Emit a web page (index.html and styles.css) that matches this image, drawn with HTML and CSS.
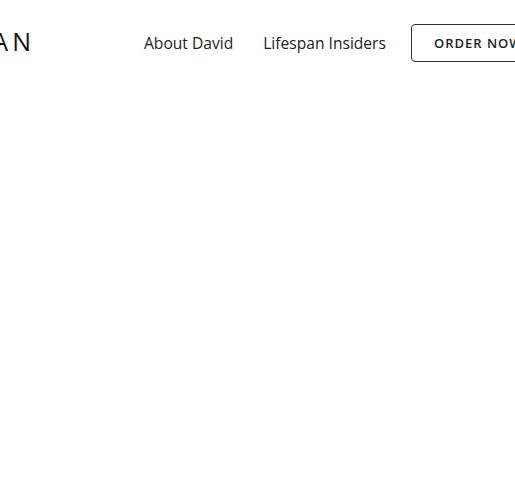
FILE: index.html
```html
<!DOCTYPE html>
<html lang="en">
<head>
  <meta charset="UTF-8">
  <meta name="viewport" content="width=device-width, initial-scale=1.0">
  <title>Lifespan</title>
  <link rel="stylesheet" href="styles.css">
</head>
<body>
  <header class="site-header">
    <div class="logo">LIFESPAN</div>
    <nav class="nav">
      <a href="#" class="nav-link">About David</a>
      <a href="#" class="nav-link">Lifespan Insiders</a>
    </nav>
    <a href="#" class="btn-order">ORDER NOW</a>
  </header>
</body>
</html>
```
FILE: styles.css
```css
* {
  box-sizing: border-box;
  margin: 0;
  padding: 0;
}

html, body {
  overflow: hidden;
}

body {
  font-family: 'Open Sans', sans-serif;
  background: #fff;
  color: #222;
  height: 500px;
}

.site-header {
  display: flex;
  align-items: center;
  height: 86px;
  width: 700px;
  margin-left: -115px;
}

.logo {
  flex: none;
  width: 150px;
  margin-right: -4px;
  margin-bottom: 5px;
  text-align: right;
  font-size: 25px;
  font-weight: 400;
  letter-spacing: 4px;
  color: #111;
}

.nav {
  display: flex;
  gap: 30px;
  margin-left: 113px;
}

.nav-link {
  font-size: 15.6px;
  font-weight: 500;
  color: #222;
  text-decoration: none;
}

.btn-order {
  margin-left: 25px;
  height: 38px;
  padding: 0 22px;
  display: flex;
  align-items: center;
  border: 1px solid #333;
  border-radius: 4px;
  font-size: 13px;
  font-weight: 600;
  letter-spacing: 1px;
  color: #222;
  text-decoration: none;
}
```
